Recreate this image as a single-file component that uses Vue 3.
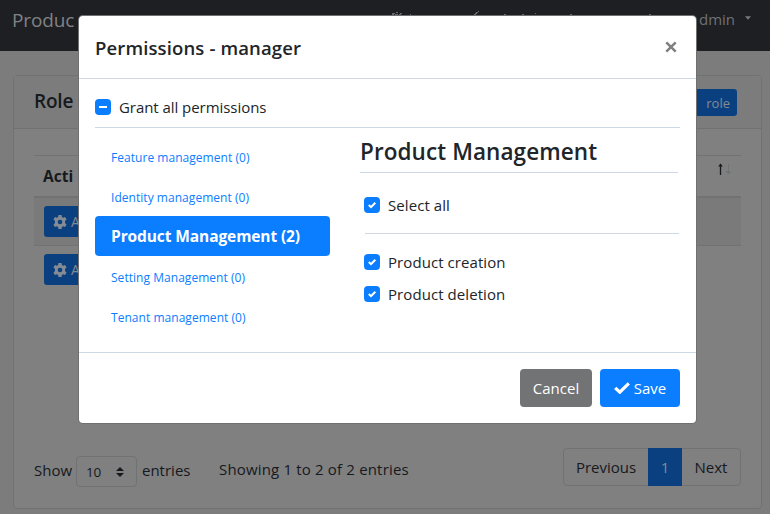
<script setup>
import { ref } from 'vue'
const groups = ref([
  { name: 'Feature management', count: 0 },
  { name: 'Identity management', count: 0 },
  { name: 'Product Management', count: 2, active: true },
  { name: 'Setting Management', count: 0 },
  { name: 'Tenant management', count: 0 },
])
const permissions = ref(['Product creation', 'Product deletion'])
const rows = [1, 2]
</script>

<template>
  <div class="page">
    <nav class="navbar">
      <span class="brand">Produc</span>
      <svg class="nav-edge" width="270" height="16" viewBox="0 0 270 16" shape-rendering="crispEdges">
        <path d="M4 13h3M8 12h2M12 13h2M4 14h2M7 14h3M11 14h2M22 14h1M90 11h1M88 12h2M87 13h2M86 14h2M116 14h2M134 14h2M147 13h1M182 14h2M261 14h2" />
      </svg>
      <span class="user">dmin</span>
      <svg class="caret" width="6" height="4" viewBox="0 0 6 4"><path d="M0 .3h6L3 3.800z" /></svg>
    </nav>
    <main class="card">
      <header class="card-head">
        <h1>Role</h1>
        <span class="new-role">role</span>
      </header>
      <div class="table">
        <div class="thead">
          <b>Acti</b>
          <svg width="14" height="13" viewBox="0 0 14 13">
            <path d="M3.5 1v11" stroke="#16191d" stroke-width="1.3" /><path d="M1.200 3.500l2.300-3L5.800 3.500z" fill="#16191d" />
            <path d="M11.5 1v9M9.500 8.5l2 2.500 2-2.500z" stroke="#707274" fill="#707274" />
          </svg>
        </div>
        <div v-for="r in rows" :key="r" class="trow" :class="{ odd: r === 1 }">
          <span class="action">
            <svg width="14" height="14" viewBox="0 0 14 14">
              <path fill-rule="evenodd" d="M5.5 0h3l.4 2 1.2.7 2-.7 1.4 2.5-1.5 1.4v2.2l1.5 1.4L12.100 12l-2-.7-1.200.7-.4 2h-3l-.4-2-1.200-.7-2 .7L.5 9.500 2 8.100V5.900L.5 4.500 1.900 2l2 .7L5.100 2zM7 4.700a2.300 2.300 0 1 0 0 4.600 2.300 2.300 0 0 0 0-4.600z" />
            </svg>
            <span>A</span>
          </span>
        </div>
      </div>
      <footer class="table-foot">
        <span class="show">Show</span>
        <span class="select">10
          <svg width="8" height="10" viewBox="0 0 8 10"><path d="M4 0l4 4H0zM4 10l4-4H0z" /></svg>
        </span>
        <span class="entries">entries</span>
        <span class="info">Showing 1 to 2 of 2 entries</span>
        <div class="pager"><span class="prev">Previous</span><span class="current">1</span><span class="next">Next</span></div>
      </footer>
    </main>

    <section class="modal">
      <header class="modal-head">
        <h2>Permissions - manager</h2>
        <svg width="12" height="12" viewBox="0 0 12 12"><path d="M1.300 1.300l9.400 9.400M10.700 1.300L1.300 10.700" /></svg>
      </header>
      <div class="modal-body">
        <div class="check grant">
          <i class="box"><svg width="16" height="16" viewBox="0 0 16 16"><path d="M4 8h8" /></svg></i>
          <span>Grant all permissions</span>
        </div>
        <div class="columns">
          <div class="tabs">
            <div v-for="g in groups" :key="g.name" class="tab" :class="{ active: g.active }"><span>{{ g.name }} ({{ g.count }})</span></div>
          </div>
          <div class="panel">
            <h3><span>Product Management</span></h3>
            <div class="check select-all">
              <i class="box"><svg width="16" height="16" viewBox="0 0 16 16"><path d="M4.800 8l2.200 2.200 4.300-4.400" /></svg></i>
              <span>Select all</span>
            </div>
            <div class="rule"></div>
            <div v-for="p in permissions" :key="p" class="check item">
              <i class="box"><svg width="16" height="16" viewBox="0 0 16 16"><path d="M4.800 8l2.200 2.200 4.300-4.400" /></svg></i>
              <span>{{ p }}</span>
            </div>
          </div>
        </div>
      </div>
      <footer class="modal-foot">
        <button class="cancel">Cancel</button>
        <button class="save">
          <svg width="16" height="12" viewBox="0 0 16 12"><path d="M1.200 5.800l4.600 4.400L14.800 1.400" /></svg>
          <span>Save</span>
        </button>
      </footer>
    </section>
  </div>
</template>

<style>
body { margin: 0; overflow: hidden; }
</style>

<style scoped>
* { box-sizing: border-box; }
h1, h2, h3 { margin: 0; }
span, b, h2 { white-space: nowrap; }
svg { display: block; flex: none; }
.page {
  position: relative; width: 770px; height: 514px; overflow: hidden; background: #7c7c7c;
  font-family: "Open Sans", "Noto Sans", sans-serif; font-size: 15px; color: #16191d;
}
.navbar { height: 51px; background: #1d1f23; display: flex; color: #818285; padding-left: 12px; }
.brand { font-size: 19px; line-height: 40px; width: 376px; letter-spacing: -.15px; }
.nav-edge { width: 270px; margin-right: 41px; }
.nav-edge path { stroke: #65686c; fill: none; transform: translateY(.5px); }
.user { font-size: 15px; line-height: 38px; width: 46px; color: #6f7175; }
.caret { margin-top: 16px; fill: #77797c; }
.card { margin: 24px 8px 0 13px; height: 434px; border: 1px solid #707172; border-radius: 4px; background: #808080; display: flex; flex-direction: column; }
.card-head { height: 53px; flex: none; border-bottom: 1px solid #707172; background: #7c7c7c; display: flex; justify-content: space-between; padding: 13px 24px 0 20px; }
h1 { font-size: 19px; line-height: 25px; font-weight: 600; letter-spacing: -.2px; }
.new-role { width: 60px; height: 27px; border-radius: 3px; background: #0b4080; color: #858b93; font-size: 13px; line-height: 28px; text-align: right; padding-right: 7px; }
.table { margin: 26px 20px 0; height: 290px; flex: none; }
.thead { height: 43px; border-top: 1px solid #707274; border-bottom: 2px solid #707274; display: flex; justify-content: space-between; padding: 7px 10px 0 9px; }
.thead b { font-size: 15.5px; line-height: 27px; }
.trow { height: 48px; padding: 8px 10px; }
.trow.odd { height: 48px; background: #7a7a7a; border-bottom: 1px solid #707274; }
.action { display: flex; align-items: center; gap: 4px; width: 90px; height: 31px; border-radius: 3px; background: #0b4080; color: #858b93; font-size: 14px; padding-left: 9px; }
.action svg { fill: #858b93; }
.table-foot { display: flex; align-items: flex-start; padding: 0 20px; margin-top: 3px; }
.show { width: 42px; line-height: 44px; }
.select { display: flex; align-items: center; justify-content: space-between; width: 61px; height: 31px; margin-top: 8px; border: 1px solid #707274; border-radius: 4px; padding: 0 12px 0 9px; font-size: 13.5px; letter-spacing: -.3px; }
.select svg { fill: #16191d; }
.entries { width: 77px; margin-left: 5px; line-height: 44px; }
.info { line-height: 43px; letter-spacing: .17px; }
.pager { display: flex; margin-left: auto; width: 178px; height: 38px; border: 1px solid #707274; border-radius: 4px; line-height: 37px; text-align: center; }
.prev { width: 84px; }
.current { width: 34px; height: 38px; margin-top: -1px; background: #0b4080; color: #858b93; line-height: 39px; }
.next { width: 58px; }

.modal { position: absolute; left: 79px; top: 16px; width: 617px; height: 407px; background: #fff; border-radius: 4px; box-shadow: 0 0 0 1px #707070; }
.modal-head { height: 63px; border-bottom: 1px solid #ced8e4; display: flex; justify-content: space-between; padding: 16px 19px 0 16px; }
h2 { font-size: 18.500px; line-height: 32px; font-weight: 600; letter-spacing: .13px; color: #212529; }
.modal-head svg { margin-top: 9px; stroke: #7f7f7f; stroke-width: 2.500px; fill: none; }
.modal-body { height: 273px; padding: 0 16px; }
.check { display: flex; align-items: center; gap: 8px; color: #212529; letter-spacing: -.05px; }
.item, .select-all { letter-spacing: .07px; }
.box { width: 16px; height: 16px; border-radius: 4px; background: #0b7dff; flex: none; }
.box path { fill: none; stroke: #fff; stroke-width: 2px; }
.grant { height: 49px; padding-top: 8px; border-bottom: 1px solid #ced8e4; }
.columns { display: flex; gap: 30px; }
.tabs { width: 235px; padding-top: 8px; }
.tab { height: 40px; line-height: 43px; padding-left: 16px; border-radius: 4px; color: #0b7dff; font-size: 12px; letter-spacing: .04px; }
.tab.active { background: #0b7dff; color: #fff; font-size: 15.500px; line-height: 41px; font-weight: 700; letter-spacing: -.1px; }
.panel { width: 320px; }
h3 { height: 45px; border-bottom: 1px solid #ced8e4; font-size: 22.500px; line-height: 48px; font-weight: 600; letter-spacing: .08px; color: #212529; margin-right: 2px; }
.select-all { height: 60px; padding: 4px 0 0 4px; }
.rule { height: 1px; margin: 0 1px 12px 5px; background: #ced8e4; }
.item { height: 32px; padding-left: 4px; }
.modal-foot { height: 71px; border-top: 1px solid #ced8e4; display: flex; justify-content: flex-end; gap: 8px; padding: 16px; }
button { height: 38px; border: 0; border-radius: 4px; padding: 0; color: #fff; font: 15px "Open Sans", sans-serif; display: flex; align-items: center; justify-content: center; }
.cancel { width: 72px; background: #717375; }
.save { width: 80px; background: #0b7dff; gap: 4px; }
.save path { fill: none; stroke: #fff; stroke-width: 3.200px; }
</style>
